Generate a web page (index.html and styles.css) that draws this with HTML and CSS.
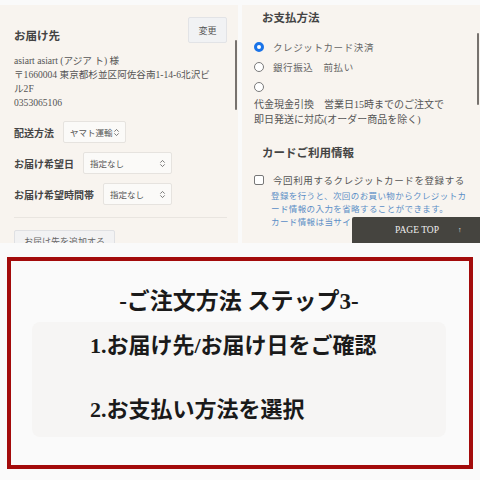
FILE: index.html
```html
<!DOCTYPE html>
<html lang="ja">
<head>
  <meta charset="UTF-8" />
  <meta name="viewport" content="width=device-width, initial-scale=1.0"/>
  <title>ご注文方法 ステップ3</title>
  <link rel="stylesheet" href="styles.css">
</head>
<body>

  <div class="shots">
    <div class="panel left">
      <div class="ship-head">
        <h2 class="panel-title">お届け先</h2>
        <div class="btn-change">変更</div>
      </div>
      <div class="address">
        <div>asiart asiart (アジア ト) 様</div>
        <div>〒1660004 東京都杉並区阿佐谷南1-14-6北沢ビ</div>
        <div>ル2F</div>
        <div>0353065106</div>
      </div>

      <div class="field">
        <span class="field-label">配送方法</span>
        <span class="select w-ship">ヤマト運輸
          <svg class="arrows" viewBox="0 0 8 10"><path d="M1.5 4 L4 1.5 L6.5 4 M1.5 6 L4 8.5 L6.5 6"/></svg>
        </span>
      </div>
      <div class="field">
        <span class="field-label">お届け希望日</span>
        <span class="select w-date">指定なし
          <svg class="arrows" viewBox="0 0 8 10"><path d="M1.5 4 L4 1.5 L6.5 4 M1.5 6 L4 8.5 L6.5 6"/></svg>
        </span>
      </div>
      <div class="field">
        <span class="field-label">お届け希望時間帯</span>
        <span class="select w-time">指定なし
          <svg class="arrows" viewBox="0 0 8 10"><path d="M1.5 4 L4 1.5 L6.5 4 M1.5 6 L4 8.5 L6.5 6"/></svg>
        </span>
      </div>

      <div class="divider"></div>
      <div class="btn-add">お届け先を追加する</div>

      <div class="scrollbar sb-left"></div>
    </div>

    <div class="panel right">
      <h2 class="panel-title pay-title">お支払方法</h2>
      <div class="radio-list">
        <div class="radio-row"><span class="radio checked"></span>クレジットカード決済</div>
        <div class="radio-row"><span class="radio"></span>銀行振込　前払い</div>
        <div class="radio-row"><span class="radio"></span></div>
      </div>
      <p class="cod">代金現金引換　営業日15時までのご注文で<br>即日発送に対応(オーダー商品を除く)</p>

      <h2 class="panel-title card-title">カードご利用情報</h2>
      <div class="check-row"><span class="checkbox"></span>今回利用するクレジットカードを登録する</div>
      <p class="note">登録を行うと、次回のお買い物からクレジットカ<br>ード情報の入力を省略することができます。<br>カード情報は当サイ</p>

      <div class="page-top">
        <span>PAGE TOP</span>
        <span class="up">↑</span>
      </div>
      <div class="scrollbar sb-right"></div>
    </div>
  </div>

  <div class="step">
    <h1 class="step-title">-ご注文方法 ステップ3-</h1>
    <div class="step-box">
      <p class="step-line">1.お届け先/お届け日をご確認</p>
      <p class="step-line">2.お支払い方法を選択</p>
    </div>
  </div>

</body>
</html>
```

FILE: styles.css
```css
body {
  margin: 0;
  width: 480px;
  height: 480px;
  overflow: hidden;
  background-color: #fafafa;
  font-family: "Liberation Serif", "Noto Sans CJK JP", serif;
  color: #555;
}

h1, h2, p {
  margin: 0;
}

/* top: two phone screenshots side by side */
.shots {
  display: flex;
  gap: 4px;
  padding-top: 5px;
  height: 238px;
}

.panel {
  position: relative;
  background-color: #f8f4ef;
  overflow: hidden;
}

.panel.left {
  width: 238px;
  padding: 0 11px 0 14px;
  box-sizing: border-box;
}

.panel.right {
  flex: 1;
  padding: 0 0 0 12px;
}

.panel-title {
  font-size: 11.5px;
  font-weight: bold;
  color: #444;
  line-height: 16px;
}

.ship-head {
  display: flex;
  justify-content: space-between;
  margin-top: 12px;
}

.ship-head .panel-title {
  padding-top: 11px;
}

.btn-change {
  width: 39px;
  height: 26px;
  box-sizing: border-box;
  border: 1px solid #e2e3e6;
  border-radius: 2px;
  background-color: #f1f2f4;
  font-size: 9px;
  color: #555;
  display: flex;
  align-items: center;
  justify-content: center;
}

.address {
  margin-top: 10px;
  font-size: 9.6px;
  line-height: 14px;
  white-space: nowrap;
  color: #555;
}

.field {
  display: flex;
  align-items: center;
  gap: 9px;
  height: 22px;
  margin-top: 9px;
}

.address + .field {
  margin-top: 11px;
}

.field-label {
  font-size: 10px;
  font-weight: bold;
  color: #444;
}

.select {
  height: 22px;
  box-sizing: border-box;
  border: 1px solid #e6e3df;
  border-radius: 2px;
  background-color: #fbfaf8;
  font-size: 8.5px;
  color: #555;
  display: flex;
  align-items: center;
  justify-content: space-between;
  padding: 0 5px 0 6px;
}

.w-ship { width: 63px; }
.w-date { width: 89px; }
.w-time { width: 69px; }

.arrows {
  width: 7px;
  height: 9px;
  fill: none;
  stroke: #666;
  stroke-width: 1;
}

.divider {
  height: 1px;
  background-color: #e9e5e0;
  margin-top: 12px;
}

.btn-add {
  width: 101px;
  height: 26px;
  margin-top: 12px;
  box-sizing: border-box;
  border: 1px solid #dfe0e3;
  border-radius: 2px;
  background-color: #f2f2f3;
  font-size: 9px;
  color: #666;
  text-align: center;
  line-height: 22px;
}

.scrollbar {
  position: absolute;
  width: 2px;
  border-radius: 1px;
  background-color: #77726e;
}

.sb-left {
  right: 1px;
  top: 35px;
  height: 70px;
}

.sb-right {
  right: 1px;
  top: 28px;
  height: 72px;
}

/* right screenshot */
.pay-title {
  margin: 5px 0 0 8px;
}

.radio-list {
  margin-top: 11px;
}

.radio-row {
  display: flex;
  align-items: center;
  gap: 9px;
  height: 20px;
  font-size: 9.5px;
  letter-spacing: 0.6px;
  color: #666;
}

.radio {
  width: 10px;
  height: 10px;
  box-sizing: border-box;
  border: 1px solid #7a7a7a;
  border-radius: 50%;
  background-color: #fff;
}

.radio.checked {
  border: 3px solid #1a73e8;
}

.cod {
  margin-top: 0;
  font-size: 10px;
  line-height: 15px;
  color: #555;
}

.card-title {
  margin: 18px 0 0 8px;
}

.check-row {
  display: flex;
  align-items: center;
  gap: 9px;
  margin-top: 10px;
  height: 18px;
  font-size: 9.5px;
  letter-spacing: 0.6px;
  color: #555;
}

.checkbox {
  width: 10px;
  height: 10px;
  box-sizing: border-box;
  border: 1px solid #777;
  border-radius: 2px;
  background-color: #fff;
}

.note {
  margin: 1px 0 0 17px;
  font-size: 8.5px;
  line-height: 13px;
  letter-spacing: 0.4px;
  white-space: nowrap;
  color: #5b8ec6;
}

.page-top {
  position: absolute;
  right: 0;
  bottom: 0;
  width: 128px;
  height: 26px;
  background-color: #45443f;
  color: #eee;
  font-size: 9.5px;
  display: flex;
  align-items: center;
  padding-left: 43px;
  box-sizing: border-box;
  border-radius: 2px 0 0 0;
}

.page-top .up {
  margin-left: 19px;
  font-size: 7px;
}

/* bottom: step frame */
.step {
  margin: 14px 7px 0;
  height: 212px;
  box-sizing: border-box;
  border: 4px solid #a30b0b;
  background-color: #fafafa;
  padding: 28px 23px 0 21px;
}

.step-title {
  text-align: center;
  font-size: 23px;
  line-height: 26px;
  font-weight: bold;
  color: #1a1a1a;
}

.step-box {
  margin-top: 7px;
  height: 115px;
  box-sizing: border-box;
  border-radius: 8px;
  background-color: #f6f5f4;
  padding: 9px 0 0 58px;
}

.step-line {
  font-size: 22px;
  line-height: 30px;
  font-weight: bold;
  color: #1a1a1a;
}

.step-line + .step-line {
  margin-top: 34px;
}
```
